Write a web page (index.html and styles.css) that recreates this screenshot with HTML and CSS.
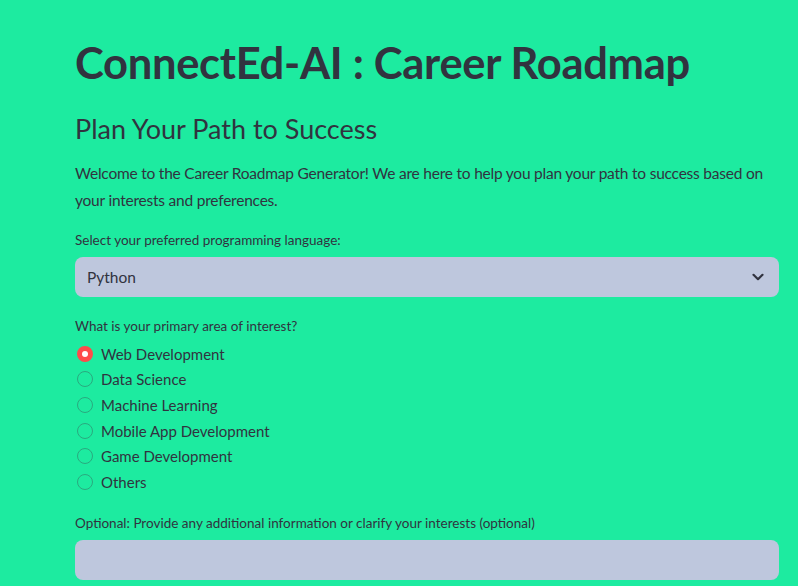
FILE: index.html
```html
<!DOCTYPE html>
<html>
<head>
<meta charset="utf-8">
<link rel="stylesheet" href="styles.css">
</head>
<body>
<main class="app">
  <h1 class="title">ConnectEd-AI : Career Roadmap</h1>
  <h3 class="subtitle">Plan Your Path to Success</h3>
  <p class="intro">Welcome to the Career Roadmap Generator! We are here to help you plan your path to success based on your interests and preferences.</p>

  <div class="field">
    <label class="label">Select your preferred programming language:</label>
    <div class="select">
      <span>Python</span>
      <svg class="chevron" width="16" height="16" viewBox="0 0 16 16"><path d="M3.5 5.8 L8 10.2 L12.5 5.8" fill="none" stroke="#31333f" stroke-width="2.2" stroke-linecap="round" stroke-linejoin="round"/></svg>
    </div>
  </div>

  <div class="field radios-field">
    <div class="label">What is your primary area of interest?</div>
    <div class="radios">
      <div class="radio checked"><span class="dot"></span><span>Web Development</span></div>
      <div class="radio"><span class="dot"></span><span>Data Science</span></div>
      <div class="radio"><span class="dot"></span><span>Machine Learning</span></div>
      <div class="radio"><span class="dot"></span><span>Mobile App Development</span></div>
      <div class="radio"><span class="dot"></span><span>Game Development</span></div>
      <div class="radio"><span class="dot"></span><span>Others</span></div>
    </div>
  </div>

  <div class="field">
    <label class="label">Optional: Provide any additional information or clarify your interests (optional)</label>
    <div class="textarea"></div>
  </div>
</main>
</body>
</html>
```

FILE: styles.css
```css
html, body {
  margin: 0;
  padding: 0;
  background: #1deba0;
  height: 100%;
  overflow: hidden;
}
body {
  font-family: "Lato", "Noto Sans", sans-serif;
  color: #31333f;
}
.app {
  width: 704px;
  margin-left: 75px;
  padding-top: 34px;
}
.title {
  font-size: 43.5px;
  font-weight: 700;
  line-height: 56px;
  margin: 0 0 22px 0;
  letter-spacing: -0.3px;
}
.subtitle {
  font-size: 27px;
  font-weight: 400;
  line-height: 34px;
  margin: 0 0 14px 0;
}
.intro {
  font-size: 15.5px;
  letter-spacing: -0.22px;
  line-height: 27px;
  margin: 0 0 16px 0;
}
.field {
  margin-bottom: 14px;
}
.label {
  display: block;
  font-size: 13.5px;
  line-height: 20px;
  margin-bottom: 7px;
}
.select {
  height: 40px;
  background: #bec7dd;
  border-radius: 8px;
  display: flex;
  align-items: center;
  justify-content: space-between;
  padding: 0 12px;
  font-size: 15.5px;
}
.chevron {
  margin-right: 1px;
}
.radios-field {
  padding-top: 5px;
  margin-bottom: 18px;
}
.radios-field .label {
  margin-bottom: 5px;
}
.radios {
  display: flex;
  flex-direction: column;
}
.radio {
  display: flex;
  align-items: center;
  height: 25.6px;
  font-size: 15px;
}
.dot {
  border-radius: 50%;
  border: 1px solid #2aa97f;
  margin: 0 8px 0 2px;
  box-sizing: border-box;
  width: 16px;
  height: 16px;
  flex: none;
}
.radio.checked .dot {
  background: #ff4b4b;
  border: 5px solid #ff4b4b;
  position: relative;
}
.radio.checked .dot::after {
  content: "";
  position: absolute;
  left: 0;
  top: 0;
  width: 6px;
  height: 6px;
  border-radius: 50%;
  background: #fff;
}
.textarea {
  height: 40px;
  background: #bec7dd;
  border-radius: 8px;
}
```
